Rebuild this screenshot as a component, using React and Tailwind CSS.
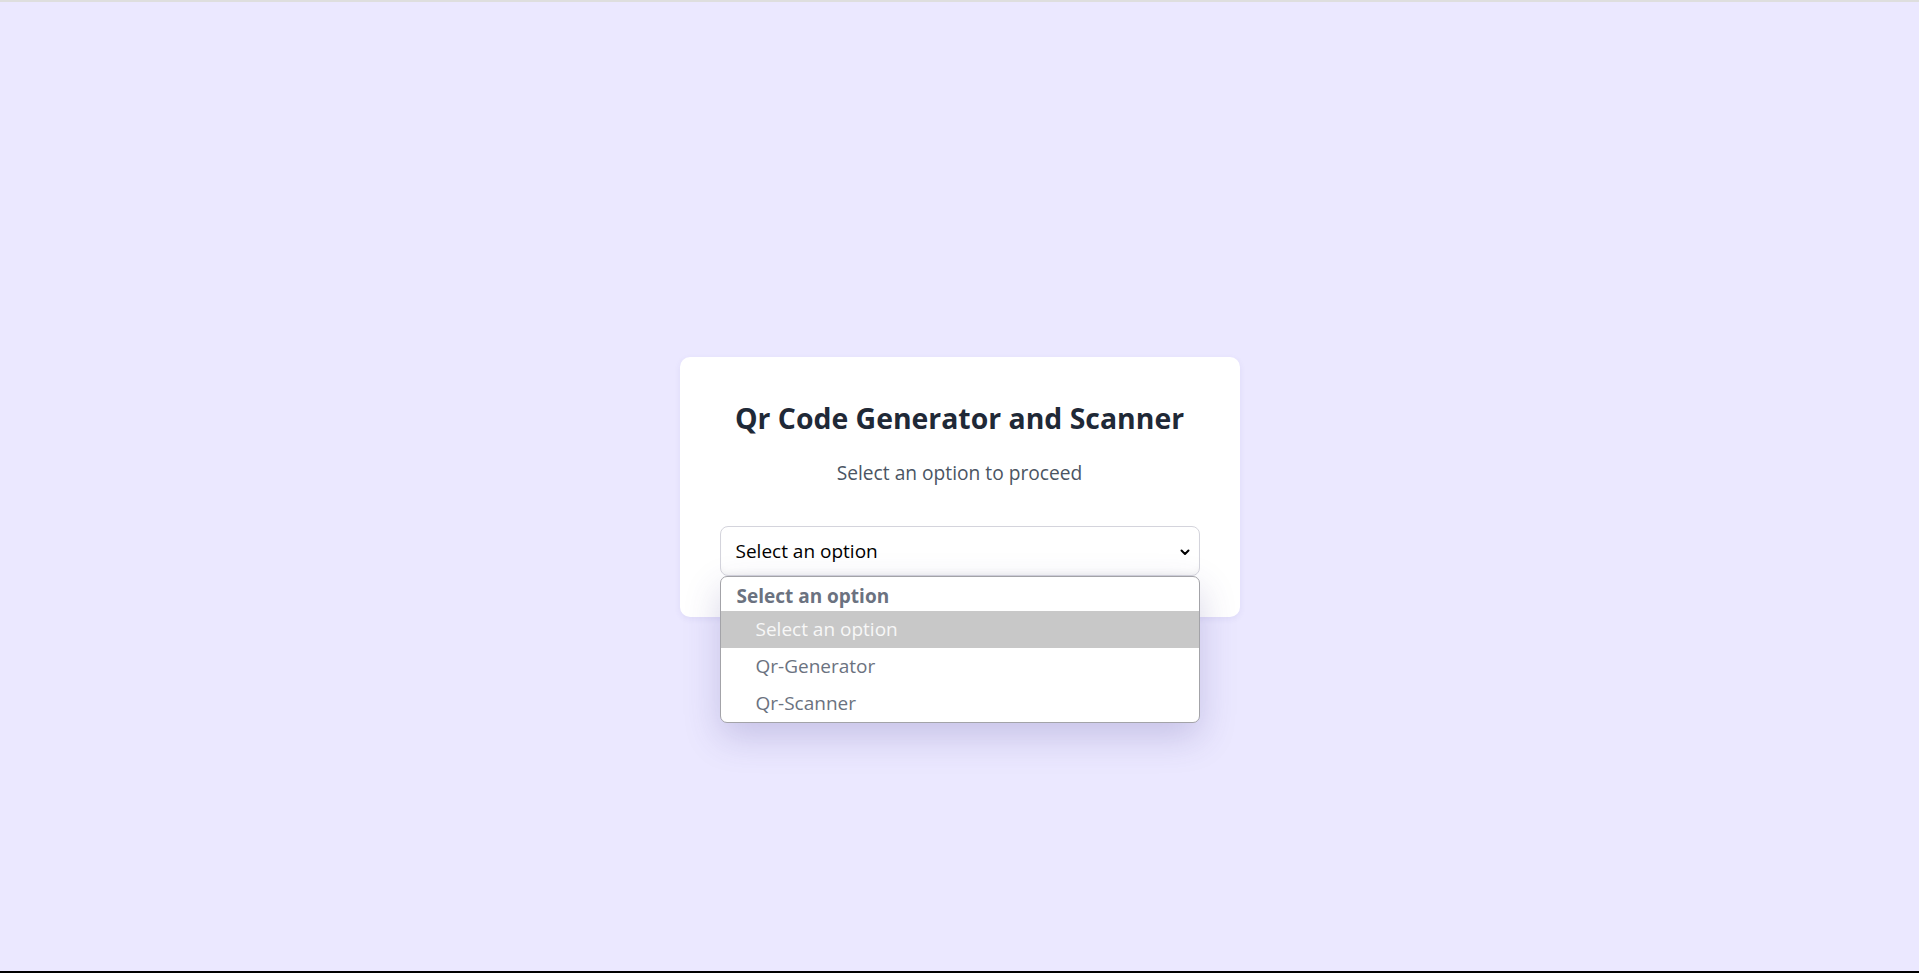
import React, { useState } from "react";

const options = ["Qr-Generator", "Qr-Scanner"];

const Chevron = () => (
  <svg width="12" height="12" viewBox="0 0 24 24" fill="none" stroke="#000" strokeWidth="4" strokeLinecap="round" strokeLinejoin="round">
    <path d="M5 9l7 7 7-7" />
  </svg>
);

const App = () => {
  const [value] = useState("");

  return (
    <div className="h-[973px] flex flex-col bg-[#ebe8ff] font-['Open_Sans',sans-serif] overflow-hidden">
      <div className="h-[2px] bg-[#dedede]" />
      <div className="flex-1 flex items-center justify-center">
        <div className="w-[560px] bg-white rounded-[10px] px-10 pt-[41px] pb-[41px] shadow-[0_2px_6px_rgba(80,70,160,0.08)] text-center">
          <h1 className="text-[28.4px] leading-[40px] font-bold text-[#1f2937] mb-5">
            Qr Code Generator and Scanner
          </h1>
          <p className="text-[19.2px] leading-[30px] text-[#4b5563] mb-[38px]">
            Select an option to proceed
          </p>
          <div className="relative text-left">
            <div className="h-[50px] flex items-center justify-between border border-[#d4d4dc] rounded-[8px] pl-[15px] pr-[8px] pt-[2px] text-[19px] text-black shadow-[inset_0_-6px_8px_-6px_rgba(0,0,0,0.08)]">
              <span>{value || "Select an option"}</span>
              <Chevron />
            </div>
            <div className="absolute left-0 right-0 top-full z-10 bg-white border border-[#a3a3a8] rounded-[7px] overflow-hidden shadow-[0_14px_36px_rgba(70,60,140,0.22)] text-[19px]">
              <div className="h-[34px] flex items-end pl-4 font-bold text-[#6b7280]">
                Select an option
              </div>
              <div className="h-[37px] flex items-center pl-[35px] bg-[#c8c8c8] text-[#f7f7f7]">
                Select an option
              </div>
              {options.map((opt) => (
                <div key={opt} className="h-[37px] flex items-center pl-[35px] text-[#6b7280]">
                  {opt}
                </div>
              ))}
            </div>
          </div>
        </div>
      </div>
      <div className="h-[2px] bg-black" />
    </div>
  );
};

export default App;
